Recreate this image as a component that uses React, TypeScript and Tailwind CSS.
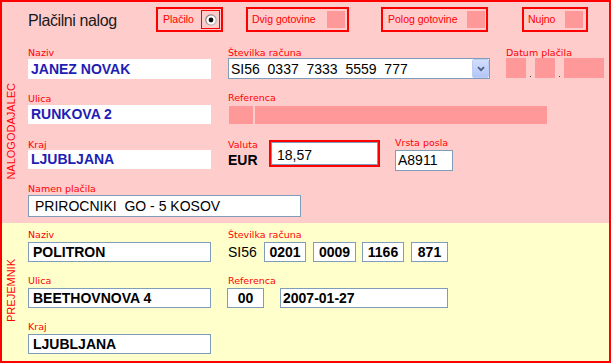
import React from "react";

const LBL = "font-['DejaVu_Sans',Verdana,sans-serif] text-[9.5px] leading-[11px] text-[#ff0000] whitespace-nowrap";
const BLUE = "text-[#1e1eb4]";

function Label({ children, cls = "" }: { children: React.ReactNode; cls?: string }) {
  return <div className={`${LBL} ${cls}`}>{children}</div>;
}

function Check({ label, w, ml, pl, mr }: { label: string; w: string; ml: string; pl: string; mr: string }) {
  return (
    <div className={`${w} ${ml} ${pl} h-[25px] border-2 border-[#ff0000] flex items-center shrink-0`}>
      <span className="text-[10.5px] text-[#ff0000] whitespace-nowrap">{label}</span>
      <div className={`ml-auto ${mr} w-[18px] h-[17px] bg-[#ff9999]`} />
    </div>
  );
}

function Radio() {
  return (
    <svg width="12" height="12" viewBox="0 0 12 12">
      <defs>
        <linearGradient id="rg" x1="0" y1="0" x2="1" y2="1">
          <stop offset="0" stopColor="#6f6f6f" />
          <stop offset="1" stopColor="#c8c8c8" />
        </linearGradient>
      </defs>
      <circle cx="6" cy="6" r="5.2" fill="#ffffff" stroke="url(#rg)" strokeWidth="1.2" />
      <circle cx="6" cy="6" r="2.4" fill="#111111" />
    </svg>
  );
}

export default function App() {
  return (
    <div className="w-[611px] h-[363px] border-2 border-[#ff0000] flex flex-col font-['Liberation_Sans',Arial,sans-serif] bg-white overflow-hidden">
      {/* NALOGODAJALEC */}
      <div className="h-[221px] bg-[#ffcccc] flex flex-col shrink-0">
        <div className="flex items-start pt-[5px] h-[30px] shrink-0">
          <div className="w-[154px] pl-[26px] pt-[2px] text-[16px] leading-[23px] tracking-[-0.4px] text-[#1a1a1a] whitespace-nowrap shrink-0">
            Plačilni nalog
          </div>
          <div className="w-[67px] pl-[5px] h-[25px] border-2 border-[#ff0000] flex items-center shrink-0">
            <span className="text-[10.5px] text-[#ff0000]">Plačilo</span>
            <div className="ml-auto mr-[1px] w-[19px] h-[19px] border border-[#ff0000] flex items-center justify-center">
              <Radio />
            </div>
          </div>
          <Check label="Dvig gotovine" w="w-[103px]" ml="ml-[23px]" pl="pl-[4px]" mr="mr-[2px]" />
          <Check label="Polog gotovine" w="w-[107px]" ml="ml-[32px]" pl="pl-[5px]" mr="mr-[1px]" />
          <Check label="Nujno" w="w-[66px]" ml="ml-[34px]" pl="pl-[4px]" mr="mr-[3px]" />
        </div>

        <div className="flex flex-1">
          <div className="w-[26px] shrink-0 flex items-center pl-[3px] pt-[7px]">
            <span className="[writing-mode:vertical-rl] rotate-180 text-[11px] leading-[12px] text-[#ff0000] whitespace-nowrap">
              NALOGODAJALEC
            </span>
          </div>

          <div className="flex flex-col">
            {/* row 1 */}
            <div className="flex items-start mt-[15px]">
              <div className="w-[183px] shrink-0">
                <Label cls="mb-[1px]">Naziv</Label>
                <div className={`h-[20px] bg-white pl-[3px] flex items-center text-[14px] font-bold ${BLUE}`}>JANEZ NOVAK</div>
              </div>
              <div className="ml-[17px] w-[262px] shrink-0">
                <Label>Številka računa</Label>
                <div className="h-[21px] bg-white border border-[#7f9db9] flex items-center">
                  <span className="flex-1 pl-[2px] pt-[1px] text-[14px] text-black whitespace-pre">SI56  0337  7333  5559  777</span>
                  <div className="w-[17px] h-[19px] bg-linear-to-b from-[#d3defd] to-[#b2c6f5] border border-[#bccdf5] rounded-[2px] flex items-center justify-center">
                    <svg width="8" height="6" viewBox="0 0 8 6">
                      <path d="M1 1.2 L4 4.2 L7 1.2" stroke="#4d6185" strokeWidth="1.8" fill="none" />
                    </svg>
                  </div>
                </div>
              </div>
              <div className="ml-[16px] shrink-0">
                <Label>Datum plačila</Label>
                <div className="flex items-end h-[20px]">
                  <div className="w-[20px] h-[20px] bg-[#ff9999]" />
                  <div className="w-[9px] flex justify-center pb-[1px]"><div className="w-[1px] h-[1px] bg-[#444]" /></div>
                  <div className="w-[20px] h-[20px] bg-[#ff9999]" />
                  <div className="w-[9px] flex justify-center pb-[1px]"><div className="w-[1px] h-[1px] bg-[#444]" /></div>
                  <div className="w-[40px] h-[20px] bg-[#ff9999]" />
                </div>
              </div>
            </div>

            {/* row 2 */}
            <div className="flex items-start mt-[14px]">
              <div className="w-[183px] shrink-0">
                <Label cls="mb-[1px]">Ulica</Label>
                <div className={`h-[19px] bg-white pl-[3px] flex items-center text-[14px] font-bold ${BLUE}`}>RUNKOVA 2</div>
              </div>
              <div className="ml-[17px] shrink-0 -mt-[1px]">
                <Label>Referenca</Label>
                <div className="flex mt-[3px] ml-[1px] gap-[2px]">
                  <div className="w-[24px] h-[18px] bg-[#ff9999]" />
                  <div className="w-[292px] h-[18px] bg-[#ff9999]" />
                </div>
              </div>
            </div>

            {/* row 3 */}
            <div className="flex items-start mt-[15px]">
              <div className="w-[183px] shrink-0">
                <Label>Kraj</Label>
                <div className={`h-[19px] bg-white pl-[3px] flex items-center text-[14px] font-bold ${BLUE}`}>LJUBLJANA</div>
              </div>
              <div className="ml-[17px] flex items-start shrink-0">
                <div className="w-[41px] shrink-0">
                  <Label>Valuta</Label>
                  <div className="mt-[2px] text-[14px] leading-[16px] font-bold text-black">EUR</div>
                </div>
                <div className="mt-[1px] w-[111px] h-[27px] border-2 border-[#ff0000] shrink-0">
                  <div className="h-full bg-white border border-[#7f9db9] pl-[5px] pt-[3px] flex items-center text-[14px] text-black">18,57</div>
                </div>
                <div className="ml-[15px] -mt-[2px] shrink-0">
                  <Label cls="mb-[2px]">Vrsta posla</Label>
                  <div className="w-[58px] h-[21px] bg-white border border-[#7f9db9] pl-[2px] flex items-center text-[14px] text-black">A8911</div>
                </div>
              </div>
            </div>

            {/* row 4 */}
            <div className="mt-[12px]">
              <Label cls="mb-[1px]">Namen plačila</Label>
              <div className="w-[273px] h-[22px] bg-white border border-[#7f9db9] pl-[6px] flex items-center text-[14px] text-black whitespace-pre">PRIROCNIKI  GO - 5 KOSOV</div>
            </div>
          </div>
        </div>
      </div>

      {/* PREJEMNIK */}
      <div className="h-[138px] bg-[#ffffcc] flex shrink-0">
        <div className="w-[26px] shrink-0 flex items-center pl-[3px] pb-[4px]">
          <span className="[writing-mode:vertical-rl] rotate-180 text-[11px] leading-[12px] text-[#ff0000] whitespace-nowrap">
            PREJEMNIK
          </span>
        </div>
        <div className="flex flex-col pt-[6px]">
          {/* row 1 */}
          <div className="flex items-start">
            <div className="w-[183px] shrink-0">
              <Label cls="mb-[2px]">Naziv</Label>
              <div className="h-[20px] bg-white border border-[#7f9db9] pl-[4px] flex items-center text-[14px] font-bold text-black">POLITRON</div>
            </div>
            <div className="ml-[17px] shrink-0">
              <Label cls="mb-[2px]">Številka računa</Label>
              <div className="flex items-center h-[20px]">
                <span className="w-[36px] text-[14px] text-black">SI56</span>
                <div className="w-[42px] h-[20px] bg-white border border-[#7f9db9] flex items-center justify-center text-[14px] font-bold text-black">0201</div>
                <div className="ml-[7px] w-[43px] h-[20px] bg-white border border-[#7f9db9] flex items-center justify-center text-[14px] font-bold text-black">0009</div>
                <div className="ml-[6px] w-[42px] h-[20px] bg-white border border-[#7f9db9] flex items-center justify-center text-[14px] font-bold text-black">1166</div>
                <div className="ml-[7px] w-[37px] h-[20px] bg-white border border-[#7f9db9] flex items-center justify-center text-[14px] font-bold text-black">871</div>
              </div>
            </div>
          </div>

          {/* row 2 */}
          <div className="flex items-start mt-[13px]">
            <div className="w-[183px] shrink-0">
              <Label cls="mb-[2px]">Ulica</Label>
              <div className="h-[20px] bg-white border border-[#7f9db9] pl-[4px] flex items-center text-[14px] font-bold text-black">BEETHOVNOVA 4</div>
            </div>
            <div className="ml-[17px] shrink-0">
              <Label cls="mb-[2px]">Referenca</Label>
              <div className="flex items-center">
                <div className="-ml-[1px] w-[37px] h-[20px] bg-white border border-[#7f9db9] flex items-center justify-center text-[14px] font-bold text-black">00</div>
                <div className="ml-[16px] w-[168px] h-[20px] bg-white border border-[#7f9db9] pl-[2px] flex items-center text-[14px] font-bold text-black">2007-01-27</div>
              </div>
            </div>
          </div>

          {/* row 3 */}
          <div className="mt-[13px] w-[183px]">
            <Label cls="mb-[2px]">Kraj</Label>
            <div className="h-[20px] bg-white border border-[#7f9db9] pl-[4px] flex items-center text-[14px] font-bold text-black">LJUBLJANA</div>
          </div>
        </div>
      </div>
    </div>
  );
}
